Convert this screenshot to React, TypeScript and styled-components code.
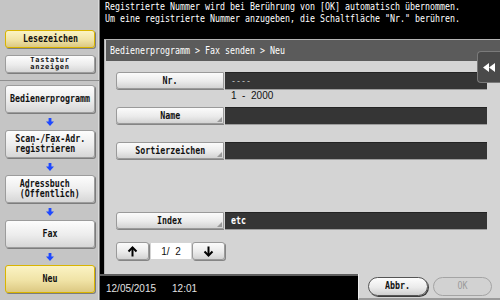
import { JSX } from "react";
import styled, { createGlobalStyle } from "styled-components";

const GlobalStyle = createGlobalStyle`
  html, body {
    margin: 0;
    padding: 0;
    background: #000;
  }
  body {
    width: 500px;
    height: 300px;
    overflow: hidden;
    font-family: "DejaVu Sans", sans-serif;
  }
  * { box-sizing: border-box; }
`;

// condensed monospace like the panel's bitmap font (5px per char)
const Mono = styled.span<{
  $origin?: string;
  $bold?: boolean;
  $color?: string;
  $lh?: number;
}>`
  display: inline-block;
  font-family: "DejaVu Sans Mono", monospace;
  font-size: 11px;
  line-height: ${(p) => p.$lh ?? 10}px;
  font-weight: ${(p) => (p.$bold ? 700 : 400)};
  color: ${(p) => p.$color ?? "inherit"};
  transform: scaleX(0.755);
  transform-origin: ${(p) => p.$origin ?? "center"};
  white-space: pre;
  text-align: left;
`;

const Screen = styled.div`
  display: flex;
  width: 500px;
  height: 300px;
  overflow: hidden;
`;

const Sidebar = styled.aside`
  width: 100px;
  flex-shrink: 0;
  display: flex;
  flex-direction: column;
  background: #c5c5c5;
  border-right: 1px solid #7a7a7a;
  box-shadow: inset -1px 0 0 #dadada;
`;

const TopGroup = styled.div`
  height: 81px;
  padding: 30px 0 0 5px;
  display: flex;
  flex-direction: column;
  gap: 7px;
  border-bottom: 1px solid #8f8f8f;
`;

const FlowList = styled.div`
  padding: 4px 0 0 5px;
  display: flex;
  flex-direction: column;
  align-items: flex-start;
`;

const SideButton = styled.div<{ $h: number; $yellow?: boolean }>`
  width: 90px;
  height: ${(p) => p.$h}px;
  display: flex;
  align-items: center;
  justify-content: center;
  color: #111;
  border-radius: 3px;
  border: 1px solid ${(p) => (p.$yellow ? "#d9b400" : "#9c9c9c")};
  background: ${(p) =>
    p.$yellow
      ? "linear-gradient(#fbf3c4, #f0e3a6 55%, #dcc882)"
      : "linear-gradient(#fdfdfd, #ececec 55%, #d6d6d6)"};
  box-shadow: 1px 1px 0 #7d7d7d;
`;

const SmallLabel = styled.span`
  font-family: "DejaVu Sans Mono", monospace;
  font-size: 7px;
  font-weight: 700;
  line-height: 7px;
  text-align: center;
  letter-spacing: 0.7px;
`;

const ArrowSlot = styled.div`
  width: 90px;
  height: 17px;
  display: flex;
  align-items: center;
  justify-content: center;
`;

const Main = styled.main`
  flex: 1;
  display: flex;
  flex-direction: column;
  background: #000;
  min-width: 0;
`;

const Message = styled.div`
  height: 39px;
  padding: 1px 0 0 5px;
  color: #fff;
  display: flex;
  flex-direction: column;
  gap: 1px;
`;

const Panel = styled.section`
  position: relative;
  flex: 1;
  margin-left: 4px;
  background: #d4d4d4;
  border-top: 1px solid #b4b4b4;
  border-left: 1px solid #b4b4b4;
  display: flex;
  flex-direction: column;
`;

const Header = styled.div`
  height: 21px;
  margin-left: 1px;
  padding-left: 4px;
  background: #5b5b5b;
  color: #fff;
  display: flex;
  align-items: center;
`;

const Content = styled.div`
  padding: 11px 0 0 11px;
  display: flex;
  flex-direction: column;
`;

const FieldRow = styled.div<{ $after: number }>`
  display: flex;
  height: 17px;
  margin-bottom: ${(p) => p.$after}px;
`;

const LabelButton = styled.div<{ $corner?: boolean }>`
  position: relative;
  width: 108px;
  height: 17px;
  display: flex;
  align-items: center;
  justify-content: center;
  color: #111;
  border: 1px solid #9a9a9a;
  border-radius: 3px 0 0 3px;
  background: linear-gradient(#fbfbfb, #ebebeb 55%, #d3d3d3);
  box-shadow: 0 1px 0 #858585;

  &::after {
    content: "";
    display: ${(p) => (p.$corner ? "block" : "none")};
    position: absolute;
    right: 1px;
    bottom: 1px;
    border-left: 5px solid transparent;
    border-bottom: 5px solid #9a9a9a;
  }
`;

const Field = styled.div`
  width: 262px;
  margin-left: 1px;
  height: 17px;
  padding-left: 6px;
  background: #353535;
  border-top: 1px solid #232323;
  box-shadow: 0 1px 0 #9c9c9c;
  display: flex;
  align-items: center;
`;

const Hint = styled.div`
  height: 18px;
  padding-left: 115px;
  font-family: "Liberation Sans", Arial, sans-serif;
  font-size: 10px;
  line-height: 13px;
  color: #111;
  white-space: pre;
`;

const Pager = styled.div`
  display: flex;
  align-items: center;
  margin-top: 13px;
  height: 18px;
`;

const PageButton = styled.div`
  width: 33px;
  height: 18px;
  display: flex;
  align-items: center;
  justify-content: center;
  border: 1px solid #9a9a9a;
  border-radius: 3px;
  background: linear-gradient(#fbfbfb, #ebebeb 55%, #d3d3d3);
  box-shadow: 1px 1px 0 #858585;
`;

const PageBox = styled.div`
  width: 40px;
  height: 16px;
  margin: 0 1px 0 2px;
  background: #fff;
  display: flex;
  align-items: center;
  justify-content: center;
  font-family: "Liberation Sans", Arial, sans-serif;
  font-size: 10px;
  color: #111;
  white-space: pre;
`;

const DrawerTab = styled.div`
  position: absolute;
  right: 0;
  top: 11px;
  width: 23px;
  height: 32px;
  background: #4a4a4a;
  border: 1px solid #7a7a7a;
  border-right: none;
  border-radius: 4px 0 0 4px;
  display: flex;
  align-items: center;
  justify-content: center;
`;

const Footer = styled.footer`
  height: 26px;
  display: flex;
`;

const DateBar = styled.div`
  width: 258px;
  background: #000;
  border-top: 2px solid #5e5e5e;
  display: flex;
  align-items: center;
  padding-left: 6px;
  font-family: "Liberation Sans", Arial, sans-serif;
  font-size: 10px;
  color: #e2e2e2;
  gap: 16px;
`;

const Actions = styled.div`
  flex: 1;
  background: #d4d4d4;
  border-left: 1px solid #ededed;
  border-bottom: 2px solid #9a9a9a;
  display: flex;
  align-items: center;
  padding-left: 9px;
  gap: 5px;
`;

const PillButton = styled.div<{ $disabled?: boolean }>`
  width: ${(p) => (p.$disabled ? 59 : 60)}px;
  height: 19px;
  border-radius: 10px;
  display: flex;
  align-items: center;
  justify-content: center;
  border: 1px solid ${(p) => (p.$disabled ? "#a4a4a4" : "#555")};
  background: ${(p) =>
    p.$disabled ? "#d2d2d2" : "linear-gradient(#fdfdfd, #ebebeb 55%, #cfcfcf)"};
  box-shadow: ${(p) => (p.$disabled ? "none" : "1px 1px 0 #3c3c3c")};
  color: ${(p) => (p.$disabled ? "#9a9a9a" : "#111")};
`;

function BlueArrow(): JSX.Element {
  return (
    <svg width="8" height="8" viewBox="0 0 8 8">
      <rect x="2.6" y="0" width="2.8" height="4" fill="#1e48ff" />
      <polygon points="0,3.6 8,3.6 4,8" fill="#1e48ff" />
    </svg>
  );
}

function PageArrow({ down }: { down?: boolean }): JSX.Element {
  return (
    <svg
      width="11"
      height="11"
      viewBox="0 0 11 11"
      style={down ? { transform: "rotate(180deg)" } : undefined}
    >
      <path d="M5.5 1.5 L5.5 10.5" stroke="#000" strokeWidth="2" />
      <path
        d="M1.5 5.5 L5.5 1.5 L9.5 5.5"
        stroke="#000"
        strokeWidth="2"
        fill="none"
      />
    </svg>
  );
}

function RewindIcon(): JSX.Element {
  return (
    <svg width="12" height="9" viewBox="0 0 12 9">
      <polygon points="0,4.5 6,0 6,9" fill="#fff" />
      <polygon points="6,4.5 12,0 12,9" fill="#fff" />
    </svg>
  );
}

const flow = [
  "Bedienerprogramm",
  "Scan-/Fax-Adr.\nregistrieren",
  "Adressbuch\n(Öffentlich)",
  "Fax",
];

export default function App(): JSX.Element {
  return (
    <>
      <GlobalStyle />
      <Screen>
        <Sidebar>
          <TopGroup>
            <SideButton $h={18} $yellow>
              <Mono $bold>Lesezeichen</Mono>
            </SideButton>
            <SideButton $h={18}>
              <SmallLabel>
                Tastatur
                <br />
                anzeigen
              </SmallLabel>
            </SideButton>
          </TopGroup>
          <FlowList>
            {flow.map((label) => (
              <div key={label}>
                <SideButton $h={28}>
                  <Mono $bold>{label}</Mono>
                </SideButton>
                <ArrowSlot>
                  <BlueArrow />
                </ArrowSlot>
              </div>
            ))}
            <SideButton $h={28} $yellow>
              <Mono $bold>Neu</Mono>
            </SideButton>
          </FlowList>
        </Sidebar>

        <Main>
          <Message>
            <Mono $origin="left" $lh={11}>
              Registrierte Nummer wird bei Berührung von [OK] automatisch übernommen.
            </Mono>
            <Mono $origin="left" $lh={11}>
              Um eine registrierte Nummer anzugeben, die Schaltfläche "Nr." berühren.
            </Mono>
          </Message>

          <Panel>
            <Header>
              <Mono $origin="left">Bedienerprogramm &gt; Fax senden &gt; Neu</Mono>
            </Header>
            <Content>
              <FieldRow $after={0}>
                <LabelButton>
                  <Mono $bold>Nr.</Mono>
                </LabelButton>
                <Field>
                  <Mono $origin="left" $color="#b8b8b8">----</Mono>
                </Field>
              </FieldRow>
              <Hint>1  -  2000</Hint>
              <FieldRow $after={18}>
                <LabelButton $corner>
                  <Mono $bold>Name</Mono>
                </LabelButton>
                <Field />
              </FieldRow>
              <FieldRow $after={53}>
                <LabelButton $corner>
                  <Mono $bold>Sortierzeichen</Mono>
                </LabelButton>
                <Field />
              </FieldRow>
              <FieldRow $after={0}>
                <LabelButton $corner>
                  <Mono $bold>Index</Mono>
                </LabelButton>
                <Field>
                  <Mono $origin="left" $bold $color="#fff">etc</Mono>
                </Field>
              </FieldRow>
              <Pager>
                <PageButton>
                  <PageArrow />
                </PageButton>
                <PageBox>1/  2</PageBox>
                <PageButton>
                  <PageArrow down />
                </PageButton>
              </Pager>
            </Content>
            <DrawerTab>
              <RewindIcon />
            </DrawerTab>
          </Panel>

          <Footer>
            <DateBar>
              <span>12/05/2015</span>
              <span>12:01</span>
            </DateBar>
            <Actions>
              <PillButton>
                <Mono $bold>Abbr.</Mono>
              </PillButton>
              <PillButton $disabled>
                <Mono>OK</Mono>
              </PillButton>
            </Actions>
          </Footer>
        </Main>
      </Screen>
    </>
  );
}
